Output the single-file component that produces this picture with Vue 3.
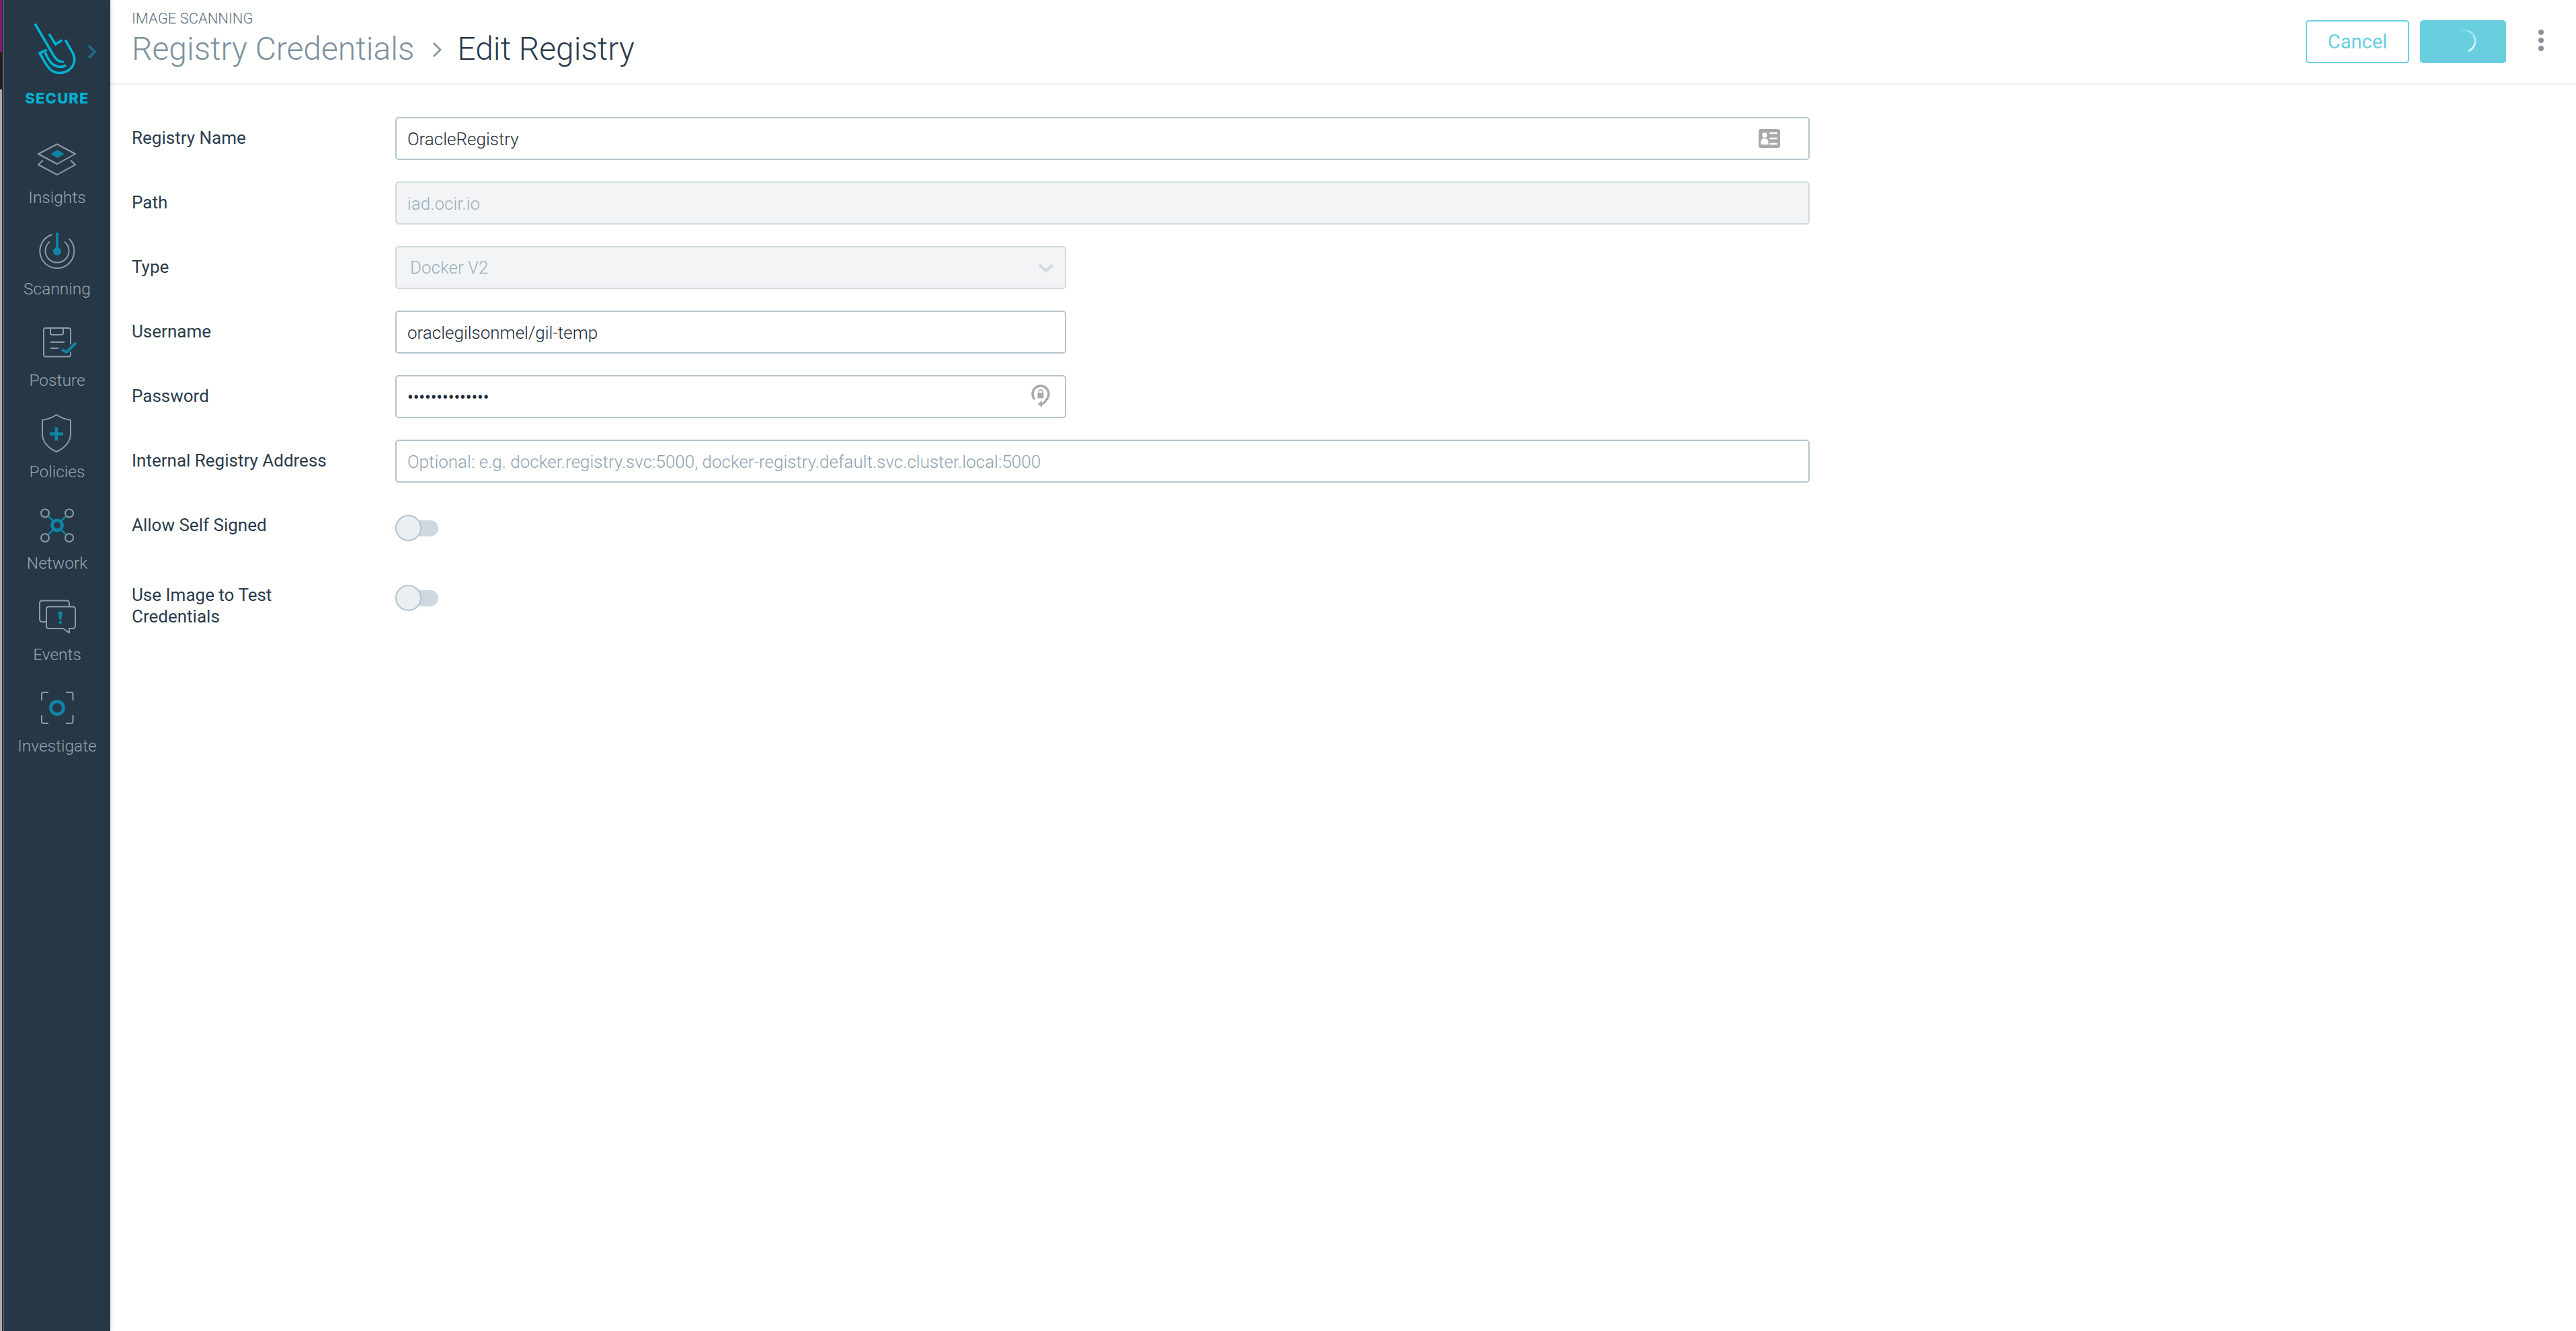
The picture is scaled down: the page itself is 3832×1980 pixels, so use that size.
<script setup>
const topFields = [
  { label: 'Registry Name', value: 'OracleRegistry', width: 'wide', icon: 'card' },
  { label: 'Path', value: 'iad.ocir.io', width: 'wide', disabled: true },
  { label: 'Type', value: 'Docker V2', width: 'half', disabled: true, select: true },
  { label: 'Username', value: 'oraclegilsonmel/gil-temp', width: 'half' },
  { label: 'Password', value: '••••••••••••••', width: 'half', icon: 'lock', secret: true },
  { label: 'Internal Registry Address', value: 'Optional: e.g. docker.registry.svc:5000, docker-registry.default.svc.cluster.local:5000', width: 'wide', placeholder: true },
]
const toggles = ['Allow Self Signed', 'Use Image to Test Credentials']
</script>

<template>
  <div class="shell">
    <div class="strip"><i class="s1"></i><i class="s2"></i><i class="s3"></i></div>
    <aside class="sidebar">
      <div class="brand">
        <div class="logo-row">
          <svg class="logo" width="120" height="90" viewBox="0 0 120 90" fill="none" stroke="#00b2d2" stroke-width="3.6" stroke-linecap="square" stroke-linejoin="miter">
            <path d="M47 7 L74 53 C78 60 83 62 87 62"/>
            <path d="M68 22 L76.700 36 L84.700 30.700"/>
            <path d="M92 31 L103 50 C106 58 105 66 99 72 C91 80 78 80 71 75 C65 71 61 63 53 49 L62 45"/>
            <path d="M62 50 C66 59 69 63 73 66 C79 70 86 70 90.700 68"/>
          </svg>
          <svg class="expand" width="14" height="22" viewBox="0 0 14 22" fill="none" stroke="#17708c" stroke-width="3.500"><path d="M2 2 L11 11 L2 20"/></svg>
        </div>
        <div class="brand-name">SECURE</div>
      </div>

      <nav class="nav">
        <a class="item">
          <svg class="ico" viewBox="0 0 72 72" fill="none" stroke="#8f9ca7" stroke-width="2" stroke-linejoin="round">
            <path d="M8 28 L36 13.500 L63 28 L36 43 Z"/>
            <path d="M28 28 L36.500 23 L45 28 L36.500 33 Z" fill="#0f84a3" stroke="#0f84a3"/>
            <path d="M15 37.500 L8 44 L36 59 L63 44 L56 37.500"/>
          </svg>
          <span>Insights</span>
        </a>
        <a class="item">
          <svg class="ico" viewBox="0 0 72 72" fill="none" stroke="#8f9ca7" stroke-width="2">
            <path d="M28.500 12 A25.500 25.500 0 1 0 53.500 18"/>
            <path d="M25 22.500 A17.500 17.500 0 1 0 47 22.500"/>
            <path d="M36 9 V36" stroke="#0f84a3" stroke-width="4"/>
            <circle cx="36" cy="37" r="6" fill="#0f84a3" stroke="none"/>
          </svg>
          <span>Scanning</span>
        </a>
        <a class="item">
          <svg class="ico" viewBox="0 0 72 72" fill="none" stroke="#8f9ca7" stroke-width="2" stroke-linejoin="round">
            <rect x="16" y="15" width="40" height="42.500" rx="3"/>
            <path d="M26 15 V22 Q26 25 29 25 H42 Q45 25 45 22 V15"/>
            <path d="M26 36 H47 M26 45 H38"/>
            <path d="M43 47 L50 51 L64 37" stroke="#263746" stroke-width="8"/>
            <path d="M43 47 L50 51 L64 37" stroke="#0f84a3" stroke-width="4"/>
          </svg>
          <span>Posture</span>
        </a>
        <a class="item">
          <svg class="ico" viewBox="0 0 72 72" fill="none" stroke="#8f9ca7" stroke-width="2" stroke-linejoin="round">
            <path d="M35 8 C41 12 48 15 56 16 V36 C56 49 46 58 35 63 C24 58 14 49 14 36 V16 C22 15 29 12 35 8 Z"/>
            <path d="M25 36.500 H45 M35 26.500 V46.500" stroke="#0f84a3" stroke-width="4.500"/>
          </svg>
          <span>Policies</span>
        </a>
        <a class="item">
          <svg class="ico" viewBox="0 0 72 72" fill="none" stroke="#8f9ca7" stroke-width="2">
            <circle cx="18" cy="18.500" r="6"/>
            <circle cx="54" cy="18.500" r="6"/>
            <circle cx="18" cy="55" r="6"/>
            <circle cx="54" cy="55" r="6"/>
            <path d="M23 23 L30 30 M49 23 L42 30 M23 50 L30 43 M49 50 L42 43" stroke="#0f84a3" stroke-width="2.500"/>
            <circle cx="36" cy="36.500" r="7.500" stroke="#0f84a3" stroke-width="5"/>
          </svg>
          <span>Network</span>
        </a>
        <a class="item">
          <svg class="ico" viewBox="0 0 72 72" fill="none" stroke="#8f9ca7" stroke-width="2" stroke-linejoin="round">
            <path d="M20 44 H14 Q10 44 10 40 V16.500 Q10 12.500 14 12.500 H50 Q54 12.500 54 16.500 V21.500"/>
            <path d="M24 21.500 H59 Q63 21.500 63 25.500 V50 Q63 54 59 54 H54 V60.500 L45 54 H24 Q20 54 20 50 V25.500 Q20 21.500 24 21.500 Z"/>
            <path d="M37.500 31 Q37.500 28.500 40.700 28.500 Q44 28.500 44 31 L42 41 H39.500 Z" fill="#0f84a3" stroke="none"/>
            <circle cx="40.700" cy="45" r="2.200" fill="#0f84a3" stroke="none"/>
          </svg>
          <span>Events</span>
        </a>
        <a class="item">
          <svg class="ico" viewBox="0 0 72 72" fill="none" stroke="#8f9ca7" stroke-width="2" stroke-linejoin="round">
            <path d="M13 25 V15.500 Q13 13 15.500 13 H23 M49 13 H57 Q59.500 13 59.500 15.500 V25 M59.500 47 V56.500 Q59.500 59 57 59 H49 M23 59 H15.500 Q13 59 13 56.500 V47"/>
            <circle cx="36" cy="36" r="9.500" stroke="#0f84a3" stroke-width="5"/>
          </svg>
          <span>Investigate</span>
        </a>
      </nav>
    </aside>

    <main class="main">
      <header class="header">
        <div class="titles">
          <div class="eyebrow">IMAGE SCANNING</div>
          <div class="crumbs">
            <span class="crumb-parent">Registry Credentials</span>
            <svg class="crumb-sep" width="14" height="24" viewBox="0 0 14 24" fill="none" stroke="#7c919e" stroke-width="2.600"><path d="M2 2 L12 12 L2 22"/></svg>
            <span class="crumb-current">Edit Registry</span>
          </div>
        </div>
        <div class="actions">
          <button class="btn cancel">Cancel</button>
          <button class="btn save" aria-label="Saving">
            <svg width="40" height="40" viewBox="0 0 40 40" fill="none" stroke-width="2.500">
              <path d="M16.500 4 A16 16 0 0 1 27.500 4" stroke="#80d7e5"/>
              <path d="M27.500 4 A16 16 0 0 1 35.900 11" stroke="#a6e2ec"/>
              <path d="M35.900 11 A16 16 0 0 1 37.800 21.800" stroke="#c4ecf3"/>
              <path d="M37.800 21.800 A16 16 0 0 1 28 33.800" stroke="#dcf4f8" stroke-width="3"/>
            </svg>
          </button>
          <div class="kebab"><i></i><i></i><i></i></div>
        </div>
      </header>

      <form class="form">
        <div v-for="f in topFields" :key="f.label" class="row">
          <div class="label">{{ f.label }}</div>
          <div class="control" :class="[f.width, { disabled: f.disabled, select: f.select, secret: f.secret, ph: f.placeholder }]">
            <span class="val">{{ f.value }}</span>
            <svg v-if="f.icon === 'card'" class="card-ico" width="32" height="28" viewBox="0 0 32 28">
              <rect width="32" height="28" rx="3.500" fill="#a9a9a9"/>
              <circle cx="9" cy="9" r="3.800" fill="#fff"/>
              <path d="M3.500 23 V19 Q3.500 14 9 14 Q14.500 14 14.500 19 V23 Z" fill="#fff"/>
              <path d="M16.500 6 H28 M16.500 14 H28 M16.500 22 H28" stroke="#fff" stroke-width="2.400"/>
            </svg>
            <svg v-if="f.icon === 'lock'" class="lock-ico" width="28" height="34" viewBox="0 0 28 34" fill="none">
              <path d="M5 22 A12 12 0 1 1 22.500 22.500 Q20 28 15 29" stroke="#a9a9a9" stroke-width="3.400"/>
              <path d="M16 24 V34 L9.500 29 Z" fill="#a9a9a9"/>
              <rect x="9.500" y="12.500" width="9" height="8" rx="1" fill="#a9a9a9"/>
              <path d="M11.200 13 V10.500 A2.800 2.800 0 0 1 16.800 10.500 V13" stroke="#a9a9a9" stroke-width="1.600"/>
            </svg>
            <svg v-if="f.select" class="chev" width="24" height="16" viewBox="0 0 24 16" fill="none" stroke="#d0dae0" stroke-width="4"><path d="M2 3 L12 12 L22 3"/></svg>
          </div>
        </div>

        <div v-for="t in toggles" :key="t" class="row toggle-row">
          <div class="label">{{ t }}</div>
          <div class="toggle"><span class="knob"></span></div>
        </div>
      </form>
    </main>
  </div>
</template>

<style scoped>
.shell {
  display: flex;
  height: 1980px;
  width: 3832px;
  overflow: hidden;
  background: #fff;
  font-family: Roboto, "Liberation Sans", sans-serif;
}
.strip {
  flex: 0 0 4px;
  display: flex;
  flex-direction: column;
  border-right: 1px solid #222;
  box-sizing: border-box;
}
.strip i { display: block; }
.s1 { height: 77px; background: #8e1a78; }
.s2 { height: 56px; background: #222; }
.s3 { flex: 1; background: #b4b4b4; }
.sidebar {
  flex: 0 0 160px;
  box-sizing: border-box;
  border-left: 2px solid #566573;
  background: #263746;
  display: flex;
  flex-direction: column;
  box-shadow: 0 0 8px rgba(0, 0, 0, 0.18);
  z-index: 1;
}
.brand { height: 189px; box-sizing: border-box; padding-top: 30px; }
.logo-row { height: 96px; position: relative; }
.logo { position: absolute; left: 0; top: 0; }
.expand { position: absolute; left: 124px; top: 36px; }
.brand-name {
  text-align: center;
  margin-top: 6px;
  font-family: Inter, sans-serif;
  font-weight: 800;
  font-size: 22px;
  line-height: 28px;
  letter-spacing: 1.2px;
  color: #00b2d2;
}
.nav { display: flex; flex-direction: column; }
.item {
  height: 136px;
  box-sizing: border-box;
  padding-top: 12px;
  display: flex;
  flex-direction: column;
  align-items: center;
}
.ico { width: 72px; height: 72px; flex: none; }
.item span {
  margin-top: 1px;
  height: 39px;
  line-height: 40px;
  font-size: 24.500px;
  font-weight: 300;
  color: #98a5af;
}
.main { flex: 1; min-width: 0; display: flex; flex-direction: column; }
.header {
  height: 126px;
  box-sizing: border-box;
  border-bottom: 2px solid #eeeeee;
  display: flex;
  justify-content: space-between;
  padding: 0 48px 0 32px;
}
.eyebrow {
  margin-top: 14px;
  height: 28px;
  line-height: 28px;
  font-size: 22px;
  font-weight: 300;
  color: #5d7080;
}
.crumbs {
  display: flex;
  align-items: center;
  height: 58px;
  margin-top: 2px;
  font-size: 48px;
  font-weight: 300;
  line-height: 58px;
}
.crumb-parent { color: #7c919e; }
.crumb-sep { margin: 2px 23px 0 27px; }
.crumb-current { color: #2a3b4c; font-weight: 300; }
.actions { display: flex; align-items: flex-start; padding-top: 30px; }
.btn {
  height: 64px;
  box-sizing: border-box;
  border-radius: 5px;
  font-family: inherit;
  font-size: 29px;
  padding: 0;
  display: flex;
  align-items: center;
  justify-content: center;
}
.cancel {
  width: 154px;
  margin-right: 16px;
  background: #fff;
  border: 2px solid #69cfdf;
  color: #69cfdf;
}
.save {
  width: 128px;
  border: 0;
  background: #69cfdf;
}
.kebab {
  width: 8px;
  margin: 14px 0 0 48px;
  display: flex;
  flex-direction: column;
  gap: 4px;
}
.kebab i { width: 8px; height: 8px; border-radius: 50%; background: #8a939c; }
.form {
  padding: 48px 0 0 32px;
  display: flex;
  flex-direction: column;
  gap: 32px;
}
.row { display: flex; min-height: 64px; }
.label {
  flex: 0 0 392px;
  box-sizing: border-box;
  padding: 15px 60px 0 0;
  font-size: 26px;
  line-height: 32px;
  color: #2a3b4c;
}
.control {
  height: 64px;
  box-sizing: border-box;
  border: 2px solid #b5c5ce;
  border-radius: 5px;
  background: #fff;
  display: flex;
  align-items: center;
  padding: 2px 16px 0;
  font-size: 26px;
  font-weight: 300;
  color: #1c2936;
  position: relative;
}
.wide { width: 2104px; }
.half { width: 998px; }
.disabled { background: #f2f4f6; border-color: #d0dae0; color: #9dafbb; }
.ph { color: #8fa2af; }
.select .val { padding-left: 4px; }
.select { padding-top: 0; }
.secret .val { font-weight: 400; letter-spacing: -0.1px; }
.card-ico { position: absolute; right: 42px; top: 16px; }
.lock-ico { position: absolute; right: 22px; top: 12px; }
.chev { position: absolute; right: 16px; top: 23px; }
.toggle-row { min-height: 72px; }
.toggle {
  width: 64px;
  height: 24px;
  margin-top: 24px;
  border-radius: 12px;
  background: #cdd8e0;
  position: relative;
}
.knob {
  position: absolute;
  left: 0;
  top: -8px;
  width: 39px;
  height: 39px;
  box-sizing: border-box;
  border-radius: 50%;
  border: 2px solid #b3c4cf;
  background: #ebeff2;
}
</style>

<style>
html, body { margin: 0; background: #fff; overflow: hidden; }
</style>
